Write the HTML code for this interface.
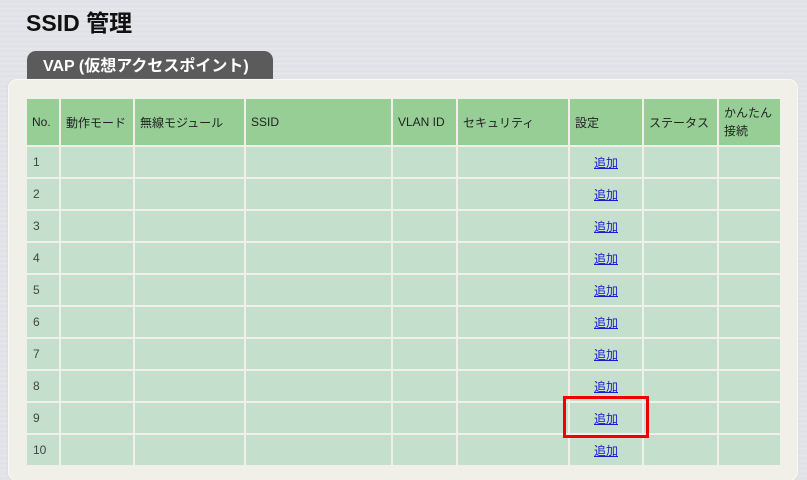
<!DOCTYPE html>
<html><head><meta charset="utf-8"><style>
body{margin:0;width:807px;height:452px;overflow:hidden;position:relative;
background:repeating-linear-gradient(180deg,#e4e6ea 0,#dcdee3 2px,#e8e9ec 3px,#dfe1e5 5px);
font-family:"Liberation Sans","Noto Sans CJK JP",sans-serif;}
h1{position:absolute;left:26px;top:4px;margin:0;font-size:23px;font-weight:bold;color:#111;}
.tab{position:absolute;left:27px;top:51px;width:246px;height:30px;background:#5b5b5b;border-radius:9px 9px 0 0;color:#fff;font-weight:bold;font-size:16px;line-height:32px;padding-left:16px;box-sizing:border-box;}
.panel{position:absolute;left:9px;top:80px;width:788px;height:400px;background:#f0efe8;border-radius:8px;box-shadow:0 0 0 1px #fafafa,0 0 2px #aaa;}
table{position:absolute;left:25px;top:97px;border-collapse:separate;border-spacing:2px;table-layout:fixed;width:757px;font-size:12px;color:#222;}
th,td{box-sizing:border-box;overflow:hidden;white-space:nowrap;}
th{background:#96ce96;font-weight:normal;text-align:left;padding:0 5px;height:46px;}
td{background:#c4dfcc;height:30px;padding:0 6px;color:#444;}
td.c{text-align:center}
a{color:#1a1ad0;text-decoration:underline;}
.red{position:absolute;left:563px;top:396px;width:80px;height:36px;border:3px solid #ee0000;}
</style></head><body>
<h1>SSID 管理</h1>
<div class="tab">VAP (仮想アクセスポイント)</div>
<div class="panel"></div>
<table>
<colgroup><col style="width:32px"><col style="width:72px"><col style="width:109px"><col style="width:145px"><col style="width:63px"><col style="width:110px"><col style="width:72px"><col style="width:73px"><col style="width:61px"></colgroup>
<tr><th>No.</th><th>動作モード</th><th>無線モジュール</th><th>SSID</th><th>VLAN ID</th><th>セキュリティ</th><th>設定</th><th>ステータス</th><th style="line-height:18px;white-space:normal">かんたん<br>接続</th></tr>
<tr><td>1</td><td></td><td></td><td></td><td></td><td></td><td class="c"><a>追加</a></td><td></td><td></td></tr>
<tr><td>2</td><td></td><td></td><td></td><td></td><td></td><td class="c"><a>追加</a></td><td></td><td></td></tr>
<tr><td>3</td><td></td><td></td><td></td><td></td><td></td><td class="c"><a>追加</a></td><td></td><td></td></tr>
<tr><td>4</td><td></td><td></td><td></td><td></td><td></td><td class="c"><a>追加</a></td><td></td><td></td></tr>
<tr><td>5</td><td></td><td></td><td></td><td></td><td></td><td class="c"><a>追加</a></td><td></td><td></td></tr>
<tr><td>6</td><td></td><td></td><td></td><td></td><td></td><td class="c"><a>追加</a></td><td></td><td></td></tr>
<tr><td>7</td><td></td><td></td><td></td><td></td><td></td><td class="c"><a>追加</a></td><td></td><td></td></tr>
<tr><td>8</td><td></td><td></td><td></td><td></td><td></td><td class="c"><a>追加</a></td><td></td><td></td></tr>
<tr><td>9</td><td></td><td></td><td></td><td></td><td></td><td class="c"><a>追加</a></td><td></td><td></td></tr>
<tr><td>10</td><td></td><td></td><td></td><td></td><td></td><td class="c"><a>追加</a></td><td></td><td></td></tr>
</table>
<div class="red"></div>
</body></html>
